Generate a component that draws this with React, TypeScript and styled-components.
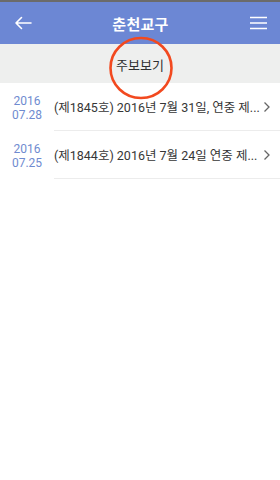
import styled, { createGlobalStyle } from "styled-components";

const GlobalStyle = createGlobalStyle`
  html, body {
    margin: 0;
    padding: 0;
    background: #ffffff;
    font-family: "Roboto", "Noto Sans CJK KR", sans-serif;
  }
`;

const bulletins = [
  { year: "2016", day: "07.28", title: "(제1845호) 2016년 7월 31일, 연중 제..." },
  { year: "2016", day: "07.25", title: "(제1844호) 2016년 7월 24일 연중 제..." },
];

function App() {
  return (
    <Screen>
      <GlobalStyle />
      <StatusStrip />
      <Header>
        <IconButton aria-label="back">
          <svg width="18" height="14" viewBox="0 0 18 14">
            <path
              d="M17 7H2M7.5 1.5L2 7l5.5 5.5"
              stroke="#fff"
              strokeWidth="1.6"
              fill="none"
              strokeLinecap="round"
              strokeLinejoin="round"
            />
          </svg>
        </IconButton>
        <HeaderTitle>춘천교구</HeaderTitle>
        <IconButton aria-label="menu">
          <svg width="19" height="14" viewBox="0 0 19 14">
            <path d="M1 1.5h17M1 7h17M1 12.5h17" stroke="#fff" strokeWidth="1.6" />
          </svg>
        </IconButton>
      </Header>
      <SubBar>
        <SubTitle>주보보기</SubTitle>
        <Highlight width="66" height="64" viewBox="0 0 66 64">
          <ellipse cx="33" cy="32" rx="30.5" ry="30" stroke="#f2491f" strokeWidth="2.6" fill="none" />
        </Highlight>
      </SubBar>
      <List>
        {bulletins.map((item, index) => (
          <Row key={index}>
            <DateBox>
              <span>{item.year}</span>
              <span>{item.day}</span>
            </DateBox>
            <RowBody>
              <RowTitle>{item.title}</RowTitle>
              <svg width="8" height="12" viewBox="0 0 8 12">
                <path d="M1.5 1.5L6 6l-4.5 4.5" stroke="#666" strokeWidth="1.3" fill="none" />
              </svg>
            </RowBody>
          </Row>
        ))}
      </List>
    </Screen>
  );
}
export default App;

const Screen = styled.div`
  width: 280px;
  min-height: 480px;
  background: #ffffff;
  overflow: hidden;
`;

const StatusStrip = styled.div`
  height: 2px;
  background: #6b6b6b;
`;

const Header = styled.div`
  height: 42px;
  background: #6c87d4;
  display: flex;
  align-items: center;
  justify-content: space-between;
  padding: 0 12px 0 13px;
`;

const IconButton = styled.div`
  width: 20px;
  height: 20px;
  display: flex;
  align-items: center;
  justify-content: center;
`;

const HeaderTitle = styled.h1`
  margin: 0;
  color: #ffffff;
  font-size: 15px;
  font-weight: 700;
  letter-spacing: 0.3px;
`;

const SubBar = styled.div`
  position: relative;
  height: 39px;
  background: #eeefee;
  display: flex;
  align-items: center;
  justify-content: center;
`;

const SubTitle = styled.span`
  color: #2f3030;
  font-size: 13px;
  font-weight: 400;
  margin-top: 2px;
`;

const Highlight = styled.svg`
  position: absolute;
  left: 108px;
  top: -8px;
`;

const List = styled.div`
  display: flex;
  flex-direction: column;
`;

const Row = styled.div`
  display: flex;
  align-items: stretch;
  height: 48px;
`;

const DateBox = styled.div`
  width: 54px;
  display: flex;
  flex-direction: column;
  align-items: center;
  justify-content: center;
  color: #6f8bd0;
  font-size: 12px;
  line-height: 14px;
  padding-top: 1px;
  box-sizing: border-box;
`;

const RowBody = styled.div`
  flex: 1;
  display: flex;
  align-items: center;
  justify-content: space-between;
  padding-right: 9px;
  border-bottom: 1px solid #ececec;
`;

const RowTitle = styled.span`
  color: #363636;
  font-size: 12.5px;
  white-space: nowrap;
`;
